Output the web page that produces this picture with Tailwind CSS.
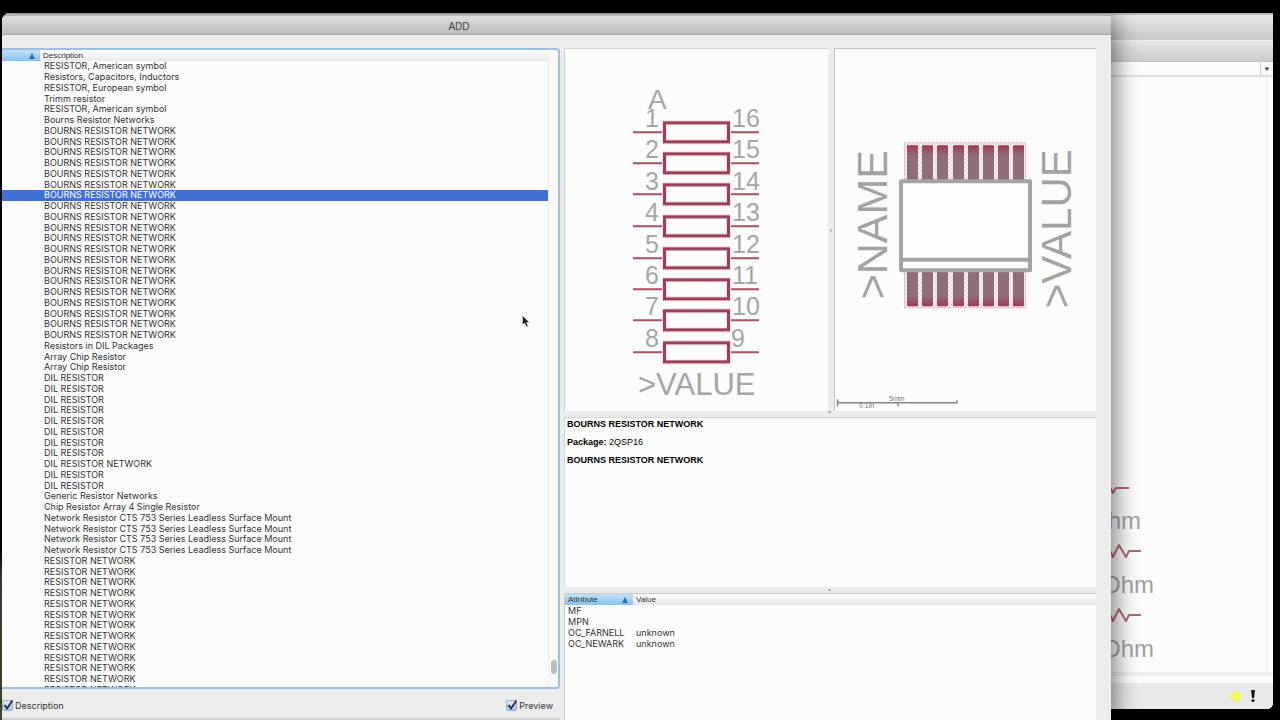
<!DOCTYPE html>
<html lang="en">
<head>
<meta charset="utf-8">
<title>ADD</title>
<script src="https://cdn.jsdelivr.net/npm/@tailwindcss/browser@4"></script>
</head>
<body class="relative h-screen overflow-hidden bg-black font-['Liberation_Sans',Arial,sans-serif] text-[9px] leading-[10px] text-[#333]">

<div class="absolute top-0 left-0 h-full w-[2px] bg-linear-to-b from-black from-75% via-[#47515a] via-80% to-[#45643a] to-86%"></div>

<!-- Schematic editor window -->
<section class="absolute top-[13px] right-[7px] bottom-[11px] left-[6px] flex flex-col overflow-hidden rounded-br-md bg-[#fcfcfc]">
  <div class="h-[27px] border-t-2 border-[#bbb] bg-linear-to-b from-[#e8e8e8] to-[#c9c9c9]"></div>
  <div class="h-[22px] border-t border-b border-t-[#eee] border-b-[#c4c4c4] bg-linear-to-b from-[#e6e6e6] to-[#cbcbcb]"></div>
  <div class="flex h-[15px] justify-end border-b-2 border-[#e0e0e0]">
    <button aria-label="Open list" class="flex w-[13px] items-center justify-center border-l border-[#ccc] bg-[#f8f8f8]">
      <svg class="h-1 w-1.5" viewBox="0 0 6 4"><path d="M0.5 0.5h5L3 4z" fill="#444"/></svg>
    </button>
  </div>
  <div class="relative min-h-0 flex-1">
    <div class="absolute top-0 right-0 h-full w-[7px] border-l-2 border-[#f1f1f1]"></div>
    <svg class="absolute right-[102px] bottom-0 h-[196px] w-[60px]" viewBox="0 0 60 196">
      <g fill="none" stroke="#b06b78" stroke-width="2" stroke-linejoin="round">
        <path d="M-4 8L0 13 2 17 5 12H18"/>
        <path d="M-4 68L2 81 8 69 15 81 18 75H30"/>
        <path d="M-4 132L2 145 8 133 15 145 18 139H30"/>
      </g>
      <g fill="#a2a2a2" font-size="24" text-anchor="end">
        <text x="30" y="53">Ohm</text><text x="43" y="117">Ohm</text><text x="43" y="181">Ohm</text>
      </g>
    </svg>
  </div>
  <div class="h-[11px] border-t-4 border-[#f0f0f0]"></div>
  <div class="flex h-[26px] items-center justify-end gap-2 bg-[#e9e9e9] pr-[17px]">
    <span class="size-[11px] rounded-full border border-[#e8ec80] bg-[#f5fa62]"></span>
    <svg class="h-3 w-1.5" viewBox="0 0 6 12"><path d="M1 0h4l-1 8H2z" fill="#111"/><circle cx="3" cy="10.500" r="1.500" fill="#111"/></svg>
  </div>
</section>

<!-- Add window -->
<main class="absolute top-[14px] right-[169px] bottom-0 left-[2px] flex flex-col rounded-tl-md bg-[#ececec] shadow-[0_4px_26px_2px_rgba(0,0,0,0.6)]">
  <h1 class="flex h-[21px] shrink-0 items-center justify-center rounded-tl-md border-t-2 border-b border-t-[#b4b4b4] border-b-[#aaa] bg-linear-to-b from-[#dedede] to-[#bcbcbc] pr-[195px] pt-[3px] text-[10px] text-[#444]">ADD</h1>

  <div class="flex min-h-0 flex-1 gap-[4px] pt-[13px] pr-[15px]">
    <!-- Device list -->
    <div class="flex min-w-0 flex-[558] flex-col">
      <div class="flex min-h-0 flex-1 overflow-hidden rounded-r-sm border-2 border-l-0 border-[#a0bedd] bg-[#fcfcfc]">
        <div class="min-w-0 flex-1 overflow-hidden">
          <table class="w-full table-fixed border-collapse">
            <colgroup><col class="w-[38px]"><col></colgroup>
            <thead>
              <tr class="h-[11px]">
                <th aria-label="Name" class="bg-linear-to-b from-[#c2e1f9] to-[#86c2f2] p-0"><svg class="ml-[27px] h-[6px] w-[6px]" viewBox="0 0 6 6"><path d="M3 0L6 6H0z" fill="#3a6f9e"/></svg></th>
                <th class="bg-linear-to-b from-[#fdfdfd] to-[#ebebeb] p-0 pl-[3px] text-left text-[8px] font-normal">Description</th>
              </tr>
            </thead>
          </table>
          <table class="h-[635px] w-full table-fixed border-collapse font-[Inter,sans-serif] whitespace-nowrap">
            <colgroup><col class="w-[38px]"><col></colgroup>
            <tbody id="devices"></tbody>
          </table>
        </div>
        <div class="flex w-[10px] items-end justify-center border-l border-[#ededed] bg-[#f8f8f8] pb-[13px]">
          <div class="h-[14px] w-[6px] rounded-full bg-[#bdbdbd]"></div>
        </div>
      </div>
      <div class="flex h-[31px] shrink-0 items-center justify-between border-b-2 border-[#cfcfcf] pt-1 pr-[7px]">
        <label class="relative flex items-center gap-[2px] font-[Inter,sans-serif]">
          <input type="checkbox" checked class="size-[11px] appearance-none rounded-xs border border-[#93abc8] bg-linear-to-b from-[#e4effa] to-[#a6c9ed]">
          <svg class="pointer-events-none absolute top-0 left-0 size-[11px]" viewBox="0 0 11 11"><path d="M2.500 5L5 8.500 10.500 0.500" fill="none" stroke="#16264c" stroke-width="1.800"/></svg>
          Description
        </label>
        <label class="relative flex items-center gap-[2px] font-[Inter,sans-serif]">
          <input type="checkbox" checked class="size-[11px] appearance-none rounded-xs border border-[#93abc8] bg-linear-to-b from-[#e4effa] to-[#a6c9ed]">
          <svg class="pointer-events-none absolute top-0 left-0 size-[11px]" viewBox="0 0 11 11"><path d="M2.500 5L5 8.500 10.500 0.500" fill="none" stroke="#16264c" stroke-width="1.800"/></svg>
          Preview
        </label>
      </div>
    </div>

    <!-- Preview, description and attributes -->
    <div class="flex min-w-0 flex-[532] flex-col gap-[6px]">
      <div class="flex min-h-0 flex-[366] gap-[6px]">
        <div class="min-w-0 flex-[264] border-t border-l border-[#d0d0d0] bg-[#fcfcfc]">
          <svg class="h-full w-full" viewBox="565 49 263 361">
            <defs>
              <g id="resistor" fill="none">
                <path d="M633 0H664M728 0H759" stroke="#a8505f" stroke-width="2"/>
                <rect x="664.500" y="-9.500" width="64" height="19" stroke="#fbdbe2" stroke-width="5"/>
                <rect x="664.500" y="-9.500" width="64" height="19" stroke="#964257" stroke-width="3"/>
              </g>
            </defs>
            <use href="#resistor" y="132"/><use href="#resistor" y="163"/><use href="#resistor" y="194"/><use href="#resistor" y="226"/>
            <use href="#resistor" y="258"/><use href="#resistor" y="289"/><use href="#resistor" y="320"/><use href="#resistor" y="352"/>
            <g fill="#a6a6a6" font-size="25">
              <text x="648" y="109" font-size="28">A</text>
              <text x="638" y="395" font-size="31">&gt;VALUE</text>
              <g text-anchor="end">
                <text x="659" y="127">1</text><text x="659" y="158">2</text><text x="659" y="190">3</text><text x="659" y="221">4</text>
                <text x="659" y="253">5</text><text x="659" y="284">6</text><text x="659" y="315">7</text><text x="659" y="347">8</text>
              </g>
              <text x="732" y="127">16</text><text x="732" y="158">15</text><text x="732" y="190">14</text><text x="732" y="221">13</text>
              <text x="732" y="253">12</text><text x="732" y="284">11</text><text x="732" y="315">10</text><text x="731" y="347">9</text>
            </g>
          </svg>
        </div>
        <div class="min-w-0 flex-[262] border-t border-l border-[#c4c4c4] bg-[#fcfcfc]">
          <svg class="h-full w-full" viewBox="835 49 261 361">
            <defs>
              <pattern id="hatch" width="4" height="4" patternUnits="userSpaceOnUse"><rect width="4" height="4" fill="#fbf3f5"/><path d="M0 4L4 0" stroke="#dfb9c3"/></pattern>
              <linearGradient id="padTop" x2="0" y2="1"><stop offset="0" stop-color="#a03a55"/><stop offset=".3" stop-color="#8e6e78"/></linearGradient>
              <linearGradient id="padBottom" x2="0" y2="1"><stop offset=".7" stop-color="#8e6e78"/><stop offset="1" stop-color="#a03a55"/></linearGradient>
              <g id="topPad"><rect x="907" y="145" width="11" height="36" rx="1" fill="url(#padTop)"/></g>
              <g id="bottomPad"><rect x="907" y="270" width="11" height="36" rx="1" fill="url(#padBottom)"/></g>
            </defs>
            <g fill="url(#hatch)" stroke="#e4c3cb" stroke-width="1"><rect x="904.500" y="142.500" width="121" height="38"/><rect x="904.500" y="270.500" width="121" height="37"/></g>
            <use href="#topPad"/><use href="#topPad" x="15"/><use href="#topPad" x="30"/><use href="#topPad" x="46"/><use href="#topPad" x="61"/><use href="#topPad" x="76"/><use href="#topPad" x="91"/><use href="#topPad" x="106"/>
            <use href="#bottomPad"/><use href="#bottomPad" x="15"/><use href="#bottomPad" x="30"/><use href="#bottomPad" x="46"/><use href="#bottomPad" x="61"/><use href="#bottomPad" x="76"/><use href="#bottomPad" x="91"/><use href="#bottomPad" x="106"/>
            <rect x="901" y="181" width="129" height="89" fill="#fdfdfd" stroke="#a3a3a3" stroke-width="4" stroke-linejoin="round"/>
            <path d="M901 259.500H1030" stroke="#a3a3a3" stroke-width="4"/>
            <g fill="#a3a3a3">
              <text font-size="43" transform="translate(887 299) rotate(-90)">&gt;NAME</text>
              <text font-size="42" transform="translate(1071 308) rotate(-90)">&gt;VALUE</text>
            </g>
            <path d="M837.500 399V406M837 402.500H957V400M898 403V406" fill="none" stroke="#858585" stroke-width="1.500"/>
            <g fill="#777" font-size="7"><text x="889" y="401">5mm</text><text x="859" y="408">0.1in</text></g>
          </svg>
        </div>
      </div>
      <div class="min-h-0 flex-[170] space-y-[8px] border-t border-l border-[#d6d6d6] bg-[#fcfcfc] pt-px pl-[2px] text-black">
        <p class="font-bold">BOURNS RESISTOR NETWORK</p>
        <p><b>Package:</b> 2QSP16</p>
        <p class="font-bold">BOURNS RESISTOR NETWORK</p>
      </div>
      <div class="min-h-0 flex-[127] border-t border-l border-[#c8c8c8] bg-[#fcfcfc]">
        <table class="w-full table-fixed border-collapse text-left">
          <colgroup><col class="w-[68px]"><col></colgroup>
          <thead class="text-[8px]">
            <tr class="h-[11px]">
              <th class="bg-linear-to-b from-[#c2e1f9] to-[#86c2f2] p-0 font-normal"><div class="flex items-center justify-between px-[3px] pr-[5px]">Attribute<svg class="h-[6px] w-[6px]" viewBox="0 0 6 6"><path d="M3 0L6 6H0z" fill="#3a6f9e"/></svg></div></th>
              <th class="bg-linear-to-b from-[#fdfdfd] to-[#e6e6e6] p-0 pl-[3px] font-normal">Value</th>
            </tr>
          </thead>
          <tbody class="font-[Inter,sans-serif] [&_td]:h-[11px] [&_td]:p-0 [&_td]:pl-[3px]">
            <tr><td>MF</td><td></td></tr>
            <tr><td>MPN</td><td></td></tr>
            <tr><td>OC_FARNELL</td><td>unknown</td></tr>
            <tr><td>OC_NEWARK</td><td>unknown</td></tr>
          </tbody>
        </table>
      </div>
    </div>
  </div>
  <!-- Splitter grips -->
  <div class="absolute top-[215px] right-[279px] h-[3px] w-[2px] rounded-full bg-[#bbb]"></div>
  <div class="absolute top-[397px] right-[280px] h-[2px] w-[3px] rounded-full bg-[#aaa]"></div>
  <div class="absolute top-[575px] right-[280px] h-[2px] w-[3px] rounded-full bg-[#aaa]"></div>
</main>

<!-- Pointer -->
<svg class="absolute top-[315px] left-[522px] h-[13px] w-[8px]" viewBox="0 0 8 13"><path d="M0.500 0.500V10L2.500 8 4.500 12 6 11.500 4.500 7.500H7.500z" fill="#222" stroke="#ddd" stroke-width=".6"/></svg>

<script>
  const groups = [
    ["RESISTOR, American symbol", 1], ["Resistors, Capacitors, Inductors", 1], ["RESISTOR, European symbol", 1],
    ["Trimm resistor", 1], ["RESISTOR, American symbol", 1], ["Bourns Resistor Networks", 1],
    ["BOURNS RESISTOR NETWORK", 20], ["Resistors in DIL Packages", 1], ["Array Chip Resistor", 2],
    ["DIL RESISTOR", 8], ["DIL RESISTOR NETWORK", 1], ["DIL RESISTOR", 2], ["Generic Resistor Networks", 1],
    ["Chip Resistor Array 4 Single Resistor", 1],
    ["Network Resistor CTS 753 Series Leadless Surface Mount", 4], ["RESISTOR NETWORK", 13]
  ];
  const selected = 12;
  document.getElementById("devices").innerHTML = groups
    .flatMap(([text, count]) => Array(count).fill(text))
    .map((text, i) => `<tr class="${i === selected ? "bg-[#3f70d6] text-white" : ""}"><td class="p-0"></td><td class="p-0 pl-[4px]">${text}</td></tr>`)
    .join("");
</script>
</body>
</html>
